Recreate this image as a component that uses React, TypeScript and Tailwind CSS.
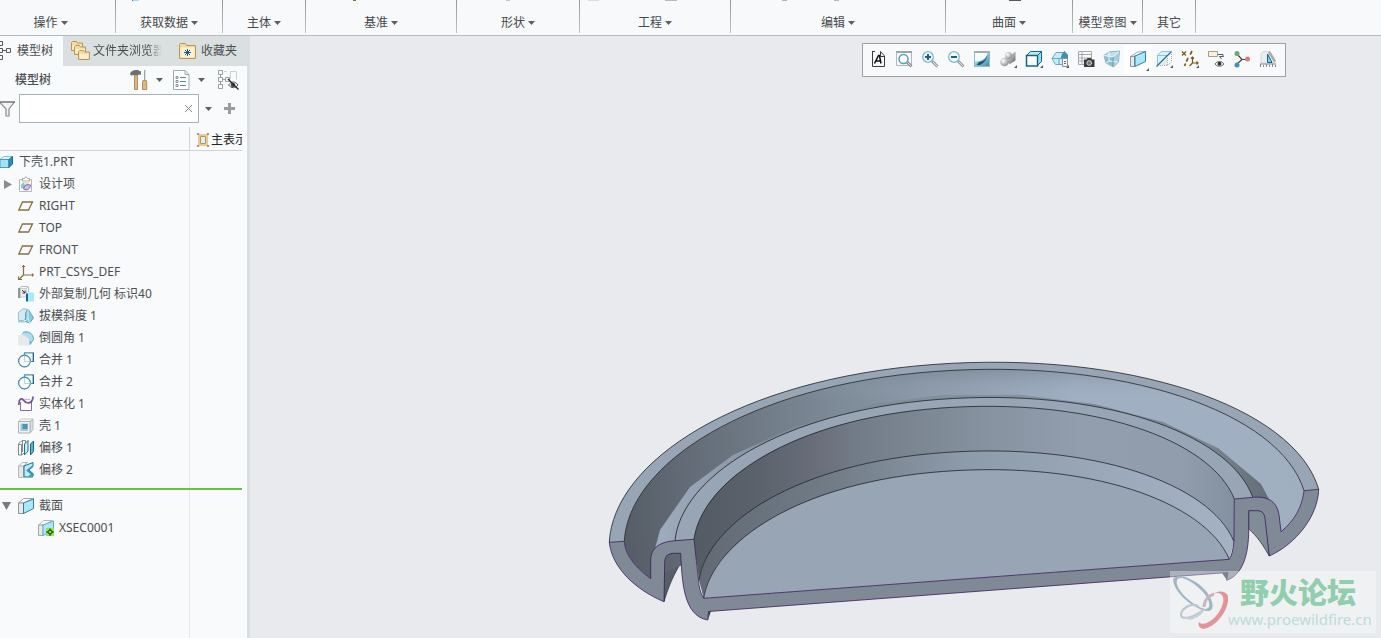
import React from 'react';

type Point = [number, number];

/* ---------- Ribbon ---------- */

type Mark = { x: number; w: number; h: number; color: string };
type RibbonGroup = { label: string; width: string; menu: boolean; marks: Mark[] };

const ribbonGroups: RibbonGroup[] = [
  { label: '操作', width: 'w-[116px]', menu: true, marks: [] },
  { label: '获取数据', width: 'w-[107px]', menu: true, marks: [{ x: 16, w: 2, h: 1, color: '#4a90b0' }, { x: 17, w: 6, h: 1, color: '#9fe0f5' }] },
  { label: '主体', width: 'w-[83px]', menu: true, marks: [] },
  { label: '基准', width: 'w-[151px]', menu: true, marks: [{ x: 47, w: 3, h: 1, color: '#8a6a30' }] },
  { label: '形状', width: 'w-[123px]', menu: true, marks: [{ x: 49, w: 4, h: 1, color: '#c4c6c8' }] },
  { label: '工程', width: 'w-[151px]', menu: true, marks: [{ x: 8, w: 11, h: 1, color: '#dcdee0' }, { x: 85, w: 12, h: 1, color: '#b8babc' }] },
  { label: '编辑', width: 'w-[215px]', menu: true, marks: [{ x: 51, w: 5, h: 1, color: '#b0b2b4' }, { x: 103, w: 5, h: 1, color: '#b8babc' }] },
  { label: '曲面', width: 'w-[127px]', menu: true, marks: [{ x: 63, w: 12, h: 1, color: '#55585c' }] },
  { label: '模型意图', width: 'w-[70px]', menu: true, marks: [] },
  { label: '其它', width: 'w-[53px]', menu: false, marks: [] },
];

function Caret() {
  return (
    <svg className="h-[4px] w-[7px] shrink-0" viewBox="0 0 7 4" aria-hidden="true">
      <path d="M0 0H7L3.5 4Z" fill="#5c5f62" />
    </svg>
  );
}

function Ribbon() {
  return (
    <header className="flex h-[36px] overflow-hidden border-b border-[#b4bcbe] bg-[#f8f9fb]">
      {ribbonGroups.map((g, i) => (
        <div key={g.label} className={`flex shrink-0 ${g.width}`}>
          <div className="flex min-w-0 flex-1 flex-col justify-between">
            <svg className="h-[2px] w-full" aria-hidden="true">
              {g.marks.map((m) => (
                <rect key={m.x} x={m.x} y="0" width={m.w} height={m.h} fill={m.color} />
              ))}
            </svg>
            <button
              type="button"
              className={`flex h-[26px] items-center justify-center gap-[3px] pt-[2px] whitespace-nowrap text-[#46484b] ${i === 0 ? 'pr-[14px]' : ''}`}
            >
              {g.label}
              {g.menu && <Caret />}
            </button>
          </div>
          <span className="h-[33px] w-px bg-linear-to-b from-[#94989c] to-[#bfc4c6]" />
        </div>
      ))}
    </header>
  );
}

/* ---------- Icons ---------- */

function Icon({ children, size = 'size-[18px]' }: { children: React.ReactNode; size?: string }) {
  return (
    <svg className={`shrink-0 ${size}`} viewBox="0 0 18 18" fill="none" aria-hidden="true">
      {children}
    </svg>
  );
}

const Corner = () => <path d="M18 15v3h-3z" fill="#55585c" />;

const RefitIcon = () => (
  <Icon>
    <path d="M3.500 1.500v15h12V6M15.500 6.500h-4v-5" stroke="#3a3d40" />
    <path d="M5.500 13.500l4-8h1l1.500 8M7 11h4.500" stroke="#111" strokeWidth="1.500" />
    <path d="M3 1.500h3M11.500 1.500l4 4.500" stroke="#3a3d40" />
  </Icon>
);
const ZoomAreaIcon = () => (
  <Icon>
    <path d="M1.500 1.500h15v14h-15z" stroke="#b5b8bb" />
    <path d="M1 2h16" stroke="#9fa3a6" strokeWidth="2" />
    <path d="M12 12l4.500 4.500" stroke="#8f9396" strokeWidth="3" />
    <path d="M12.500 12.500l3.500 3.500" stroke="#d5d8da" />
    <circle cx="8.500" cy="9" r="4.500" fill="#fff" stroke="#4fa3c4" strokeWidth="1.500" />
  </Icon>
);
const Lens = ({ plus }: { plus: boolean }) => (
  <Icon>
    <path d="M11 11l5.500 5.500" stroke="#9b9fa2" strokeWidth="3" />
    <path d="M12 12l4 4" stroke="#dfe1e2" />
    <circle cx="7" cy="7" r="5.300" fill="#f4fbfe" stroke="#7fb6cd" strokeWidth="1.300" />
    <path d={plus ? 'M4 7h6M7 4v6' : 'M4 7h6'} stroke="#12648b" strokeWidth="2" />
  </Icon>
);
const RepaintIcon = () => (
  <Icon>
    <defs>
      <linearGradient id="repaint" x1="0" x2="1" y1="0" y2="1">
        <stop offset="0" stopColor="#e6f6fb" />
        <stop offset="1" stopColor="#3d8db3" />
      </linearGradient>
    </defs>
    <path d="M1 1h16v16H1z" fill="#8fbccd" />
    <path d="M2 3h14v13H2z" fill="url(#repaint)" />
    <path d="M2 3h12.500c-1 5-5 8-12.500 8.500z" fill="#f6fbfd" />
    <path d="M14.500 4c-.5 5-4.500 7.500-8.500 8l-2.500 3h3.500C11 13 14.500 9 14.500 4z" fill="#1a5675" />
    <path d="M1 1h16v2H1z" fill="#a6abae" />
  </Icon>
);
const ShadeIcon = () => (
  <Icon>
    <defs>
      <radialGradient id="ball" cx=".35" cy=".35" r=".7">
        <stop offset="0" stopColor="#fff" />
        <stop offset="1" stopColor="#8d9092" />
      </radialGradient>
      <linearGradient id="cone" x1="0" x2="1" y1="0" y2="1">
        <stop offset="0" stopColor="#fff" />
        <stop offset="1" stopColor="#5e6163" />
      </linearGradient>
    </defs>
    <path d="M8 3l5 1 3.500-2.500v9L11 14l-4-3z" fill="url(#cone)" />
    <circle cx="9.500" cy="5.500" r="3.500" fill="url(#ball)" />
    <circle cx="5.500" cy="12" r="4.300" fill="url(#ball)" />
    <Corner />
  </Icon>
);
const CubeIcon = () => (
  <Icon>
    <path d="M1.500 5.500l4-4h11l-4 4z" fill="#bdeafa" stroke="#15668c" />
    <path d="M12.500 5.500l4-4v10l-4 4z" fill="#9edcf2" stroke="#15668c" />
    <path d="M1.500 5.500h11v10.500h-11z" fill="#fff" stroke="#15668c" strokeWidth="1.500" />
    <Corner />
  </Icon>
);
const ViewListIcon = () => (
  <Icon>
    <path d="M1 8.500l4-6h8l3 6-3 6H4.500z" fill="#c8edf8" stroke="#63a9c4" />
    <path d="M1 8.500h10M8 8.500v6" stroke="#63a9c4" />
    <path d="M9.500 8.500L11 4l2.500-3L17 5v3.500z" fill="#3d91b8" />
    <path d="M11.500 8.500h5v8h-5z" fill="#f4f5f6" stroke="#8e9295" />
    <path d="M13 11.500h2M13 13.500h2" stroke="#65696c" />
    <Corner />
  </Icon>
);
const CameraTableIcon = () => (
  <Icon>
    <path d="M1.500 1.500h13v13h-13zM1.500 4.500h13M1.500 8h13M1.500 11h9M5 1.500v13" stroke="#a5a9ac" />
    <path d="M7 9.500h2.500l1-1.500H14l1 1.500h2.500V17H7z" fill="#3a3c3f" />
    <circle cx="12.200" cy="13" r="2.300" fill="#707376" stroke="#d8dadb" />
  </Icon>
);
const PerspectiveIcon = () => (
  <Icon>
    <path d="M1 5.500L6 2l10.500-1-1 11-5 5L3 13z" fill="#c0e0ec" stroke="#8ab3c4" />
    <path d="M2 6l8 1v9l-7-3.500z" fill="#8abdd2" />
    <path d="M10 7l6-5-1 9.500-5 5z" fill="#a5cfdf" />
    <path d="M1.500 5.500L10 7l6-5.500M6 2v9l-3 2M6 11l9 1" stroke="#eaf7fb" />
    <path d="M10 7v9.500" stroke="#6a9db3" />
  </Icon>
);
const SectionIcon = () => (
  <Icon>
    <path d="M1.500 6.500l7-4.500 8-.5-9.500 4.500z" fill="#fff" stroke="#a2a5a8" />
    <path d="M1.500 6.500h4v10h-4z" fill="#e8e9ea" stroke="#929699" />
    <path d="M6 6l10.500-4.500v10L6 16.500z" fill="#a9e8fb" stroke="#337f9d" />
  </Icon>
);
const TransparentIcon = () => (
  <Icon>
    <path d="M2 16V5l4-4h9z" fill="#d6f2fa" />
    <path d="M2.500 15V5l4-3.500h9M2.500 5.500h10" stroke="#8fc6da" />
    <path d="M12.500 8v7.500H5M16.500 4v8l-4 3.500" stroke="#a5a8ab" strokeDasharray="1 1" />
    <path d="M12 8v7H5z" fill="#e6e7e8" />
    <path d="M1.500 16.500l15-15" stroke="#1a6e96" strokeWidth="1.300" />
    <Corner />
  </Icon>
);
const DatumDisplayIcon = () => (
  <Icon>
    <path d="M1 1.500l4 4M5 1.500l-4 4" stroke="#79591c" strokeWidth="1.200" />
    <path d="M11 1L9 5M7 8l-3.500 8" stroke="#79591c" strokeWidth="1.700" strokeDasharray="4 2" />
    <path d="M11.500 7v6H17M11.500 13L8.500 16M10 8.500L11.500 7 13 8.500M15.500 11.500L17 13l-1.500 1.500" stroke="#79591c" strokeWidth="1.200" />
    <Corner />
  </Icon>
);
const AnnotationIcon = () => (
  <Icon>
    <path d="M1.500 1.500h9v5h-9z" fill="#fdf0da" stroke="#a59c8c" />
    <path d="M11 4.500h5V7M16.500 6.500h-4l2 2.500" stroke="#55585c" />
    <path d="M8 14c2.500-3.500 6.500-3.500 9 0-2.500 3-6.500 3-9 0z" fill="#fff" stroke="#6a6d70" />
    <circle cx="12.500" cy="13.800" r="2" fill="#303336" />
  </Icon>
);
const SpinCenterIcon = () => (
  <Icon>
    <path d="M4 4l5 5.500M9 9.500h5M9 9.500L4 14" stroke="#44474a" strokeWidth="1.200" />
    <circle cx="4" cy="3.500" r="2.500" fill="#67ab6e" />
    <circle cx="14.500" cy="9" r="2.500" fill="#dd7d78" />
    <circle cx="4" cy="15" r="2.500" fill="#3f92b6" />
  </Icon>
);
const SimulateIcon = () => (
  <Icon>
    <path d="M2 13V4l2-2.500h7l5 9V13z" fill="#eceded" stroke="#d3d5d7" />
    <path d="M10 2l6 9.500" stroke="#a7a9ac" strokeWidth="2.500" />
    <path d="M8.500 12.500V4l4.500 8.500z" fill="#7fd0ec" stroke="#15668c" />
    <path d="M1 14h16M1.500 14v3M4.500 15v2M7.500 14v3M10.500 15v2M13.500 14v3M16.500 15v2" stroke="#85888b" />
  </Icon>
);

const viewTools: { name: string; icon: React.ReactNode; active?: boolean }[] = [
  { name: '重新调整', icon: <RefitIcon /> },
  { name: '缩放区域', icon: <ZoomAreaIcon /> },
  { name: '放大', icon: <Lens plus /> },
  { name: '缩小', icon: <Lens plus={false} /> },
  { name: '重画', icon: <RepaintIcon /> },
  { name: '渲染选项', icon: <ShadeIcon /> },
  { name: '显示样式', icon: <CubeIcon /> },
  { name: '已保存方向', icon: <ViewListIcon /> },
  { name: '视图管理器', icon: <CameraTableIcon /> },
  { name: '透视图', icon: <PerspectiveIcon /> },
  { name: '截面', icon: <SectionIcon />, active: true },
  { name: '透明', icon: <TransparentIcon /> },
  { name: '基准显示', icon: <DatumDisplayIcon /> },
  { name: '注释显示', icon: <AnnotationIcon /> },
  { name: '旋转中心', icon: <SpinCenterIcon /> },
  { name: '仿真', icon: <SimulateIcon /> },
];

function ViewToolbar() {
  return (
    <div className="absolute top-[7px] left-[612px] flex h-[34px] items-center border border-[#9da1a4] bg-[#f8f9fb] pr-[4px] pb-[2px] pl-[2px]">
      {viewTools.map((t) => (
        <button
          key={t.name}
          type="button"
          aria-label={t.name}
          className={
            t.active
              ? 'relative -mx-px flex h-[28px] w-[28px] items-center justify-center bg-white'
              : 'flex h-[28px] w-[26px] items-center justify-center'
          }
        >
          {t.icon}
          {t.active && (
            <svg className="absolute right-[3px] bottom-[2px] size-[3px]" viewBox="0 0 3 3" aria-hidden="true">
              <path d="M3 0v3H0z" fill="#55585c" />
            </svg>
          )}
        </button>
      ))}
    </div>
  );
}

/* ---------- Tree icons ---------- */

function TreeIcon({ children }: { children: React.ReactNode }) {
  return (
    <svg className="size-[16px] shrink-0" viewBox="0 0 16 16" fill="none" aria-hidden="true">
      {children}
    </svg>
  );
}

const PartIcon = () => (
  <TreeIcon>
    <path d="M0 5.500L4 2.500h8L9 5.500z" fill="#e4f7fd" stroke="#8cc3d8" />
    <path d="M0 5.500h9v8H0z" fill="#a2e2f7" stroke="#4f9cba" />
    <path d="M9 5.500l3.500-3v7.500L9 13.500z" fill="#2a92be" stroke="#176b90" />
  </TreeIcon>
);
const DesignItemsIcon = () => (
  <TreeIcon>
    <path d="M1.500 3.500h12v12h-12z" fill="#f9f9fa" stroke="#b4b7ba" />
    <path d="M4.500 5V2.500h2c0-2 3-2 3 0h2V5z" fill="#fff" stroke="#a5a8ab" />
    <path d="M3 8.500l2-2h5v3.500l-2 2H3z" fill="#7cc7e2" />
    <path d="M6 5.500h5v3H6z" fill="#f1e0bf" />
    <path d="M5.500 13c1-4 4-5 7-4-.5 4-3 6-7 4z" fill="#d3bce8" stroke="#7f62a8" />
  </TreeIcon>
);
const PlaneIcon = () => (
  <TreeIcon>
    <path d="M4.500 4h10l-4 8H.8z" stroke="#86703f" strokeWidth="1.300" />
  </TreeIcon>
);
const CsysIcon = () => (
  <TreeIcon>
    <path d="M5.500 1v10H16M5.500 11l-4.500 4.500M4 2.500h3M14.500 9.500v3M.5 12.500v3h3.500" stroke="#86703f" strokeWidth="1.200" />
  </TreeIcon>
);
const CopyGeomIcon = () => (
  <TreeIcon>
    <path d="M1.500 2.500L3 .5h7l-1.500 2zM10.500 1v5" fill="#fff" stroke="#b7babd" />
    <path d="M0 2h2.500v10H0z" fill="#929699" />
    <path d="M2.500 2.500h6V11h-6z" fill="#eeeff0" stroke="#c9cbcd" />
    <path d="M4 4l3 3M7 4.500V7H4.500" stroke="#333" />
    <path d="M8 7.500h2v8H8z" fill="#126a8f" />
    <path d="M10 6.500h6v9h-6z" fill="#a9e8fb" />
  </TreeIcon>
);
const DraftIcon = () => (
  <TreeIcon>
    <path d="M.5 12.500V4.500l4-3.500h4v9l-3 2.500z" fill="#d3e9f1" stroke="#9fc0cd" />
    <path d="M7.500 13.500V5l2.500-4 5.500 9-4 5z" fill="#84cbe4" stroke="#62a4be" />
    <path d="M10 1v9l-5 5M10 10l1.500 5" stroke="#d8f0f8" />
    <path d="M0 13h7v1.500H0z" fill="#aac9d5" />
  </TreeIcon>
);
const RoundIcon = () => (
  <TreeIcon>
    <path d="M0 5h6c4 2 5 4 5 10.500H0z" fill="#e8e9ea" />
    <path d="M3 4.500c1-2 3-3 5-3 5 0 7.500 4 7.500 8l-3.500 5c0-5-3-9-9-10z" fill="#a9def0" />
    <path d="M5 2.500c5-2 10.500 1 10.500 7l-3.500 5V11" stroke="#5ba3bf" />
  </TreeIcon>
);
const MergeIcon = () => (
  <TreeIcon>
    <circle cx="6.500" cy="9" r="5.900" stroke="#4088a5" strokeWidth="1.200" />
    <path d="M6.500 4V.8H15M12.500 9.500h3" stroke="#4f97b3" strokeWidth="1.200" />
    <path d="M6.500 4v5.500h6" stroke="#b3d6e3" />
    <path d="M15.300.500v9.500" stroke="#1d6384" strokeWidth="1.300" />
  </TreeIcon>
);
const SolidifyIcon = () => (
  <TreeIcon>
    <path d="M2.500 6v8.500h11V5" fill="#fff" stroke="#8a69b0" />
    <path d="M.8 9c0-6 2.500-8 5-4.500S13 8 14.500 3.500l.7-3" stroke="#7751a0" strokeWidth="1.700" />
    <path d="M6 3.500h6" stroke="#c6b0dc" />
  </TreeIcon>
);
const ShellIcon = () => (
  <TreeIcon>
    <path d="M.5 3.500l3-2.500h11.500l-3 2.500z" fill="#f6f6f7" stroke="#c6c8ca" />
    <path d="M12 3.500L15 1v10.500l-3 3.500z" fill="#dcdedf" stroke="#b6b9bb" />
    <path d="M.5 3.500h11.500V15H.5z" fill="#f2f2f3" stroke="#b0b3b5" />
    <path d="M2.500 5.500h7.500V13H2.500z" fill="#9fcadc" />
    <path d="M4.500 6h5v5h-5z" fill="#4a93b3" />
  </TreeIcon>
);
const OffsetIcon = () => (
  <TreeIcon>
    <path d="M.5 3.500l4-3h3M.5 3.500V15h3l4-3V.500M3.500 15V4.500h-3M4.500.5V12" stroke="#85898c" />
    <path d="M6.500 4l3.500-3.500V11L6.500 15z" fill="#c9eefa" stroke="#236f91" />
    <path d="M12.500 4L15.500 1v10.500l-3 3.500z" fill="#58b6d8" stroke="#1d6384" />
  </TreeIcon>
);
const OffsetRegionIcon = () => (
  <TreeIcon>
    <path d="M.5 4l4-3.500h5L5.500 4z" fill="#fff" stroke="#aeb1b4" />
    <path d="M.5 4h5v11.500h-5z" fill="#e6e7e8" stroke="#b8bbbd" />
    <path d="M6 4l9-3.500v3.500l-4 4 4.500 4-1 3H6z" fill="#bcecfb" stroke="#236f91" />
    <path d="M15 4L9.500 8.500l5 4-3.500 2" stroke="#3694bb" strokeWidth="1.700" />
  </TreeIcon>
);
const SectionGroupIcon = () => (
  <TreeIcon>
    <path d="M.5 5l5-4.500h10L6 5z" fill="#fff" stroke="#a2a5a8" />
    <path d="M.5 5H5.500v10.500h-5z" fill="#e8e9ea" stroke="#929699" />
    <path d="M5.500 5l10-4v9.500l-10 5z" fill="#a9e8fb" stroke="#337f9d" />
  </TreeIcon>
);
const XsecIcon = () => (
  <TreeIcon>
    <path d="M.5 5l5-4.500h9L6 5z" fill="#fff" stroke="#b6b9bb" />
    <path d="M.5 5H5v10.500H.5z" fill="#e8e9ea" stroke="#a2a5a8" />
    <path d="M5 5l10.500-4v9.500L5 15.500z" fill="#a9e8fb" stroke="#6aa9c1" />
    <path d="M8 8h8v8H8z" fill="#8ce65a" />
    <path d="M12 9.500l2.500 2.500-2.500 2.500L9.500 12zM12 8.500v1.500M12 14v2M8 12h2M14 12h2" stroke="#2c4f15" strokeWidth="1.200" />
  </TreeIcon>
);

/* ---------- Side panel ---------- */

const treeItems: { label: string; icon: React.ReactNode; expandable?: boolean }[] = [
  { label: '设计项', icon: <DesignItemsIcon />, expandable: true },
  { label: 'RIGHT', icon: <PlaneIcon /> },
  { label: 'TOP', icon: <PlaneIcon /> },
  { label: 'FRONT', icon: <PlaneIcon /> },
  { label: 'PRT_CSYS_DEF', icon: <CsysIcon /> },
  { label: '外部复制几何 标识40', icon: <CopyGeomIcon /> },
  { label: '拔模斜度 1', icon: <DraftIcon /> },
  { label: '倒圆角 1', icon: <RoundIcon /> },
  { label: '合并 1', icon: <MergeIcon /> },
  { label: '合并 2', icon: <MergeIcon /> },
  { label: '实体化 1', icon: <SolidifyIcon /> },
  { label: '壳 1', icon: <ShellIcon /> },
  { label: '偏移 1', icon: <OffsetIcon /> },
  { label: '偏移 2', icon: <OffsetRegionIcon /> },
];

function Folder({ x, y }: { x: number; y: number }) {
  return (
    <g transform={`translate(${x} ${y})`}>
      <path d="M.5 9.500v-8l1-1h4l1 1.500h5v7.500z" fill="#f6d99f" stroke="#b8965a" />
      <path d="M1.500 4h9v4.500h-9z" fill="#fdf0cf" />
    </g>
  );
}

function PanelTabs() {
  return (
    <div role="tablist" className="flex h-[30px] bg-[#dae0e0]">
      <button role="tab" aria-selected="true" type="button" className="flex w-[63px] items-center gap-[6px] bg-[#f8fafb] whitespace-nowrap">
        <svg className="h-[20px] w-[11px] shrink-0" viewBox="0 0 11 20" fill="none" stroke="#55585c" aria-hidden="true">
          <path d="M-1 .5h3.500v4H-1M-1 7.500h3.500v4H-1M-1 14.500h3.500v4H-1M3 9.500h3M6.500 7.500h4v4h-4z" />
        </svg>
        模型树
      </button>
      <button role="tab" aria-selected="false" type="button" className="flex w-[108px] items-center gap-[2px] pl-[8px] whitespace-nowrap">
        <svg className="h-[20px] w-[20px] shrink-0" viewBox="0 0 20 20" aria-hidden="true">
          <Folder x={0} y={0} />
          <Folder x={3} y={4} />
          <Folder x={7} y={9} />
        </svg>
        <span className="w-[69px] overflow-hidden mask-r-from-80% text-left">文件夹浏览器</span>
      </button>
      <button role="tab" aria-selected="false" type="button" className="flex flex-1 items-center gap-[5px] pl-[8px] whitespace-nowrap">
        <svg className="h-[16px] w-[17px] shrink-0" viewBox="0 0 17 16" aria-hidden="true">
          <path d="M.5 15.500v-14l1-1h5l1 2h9v13z" fill="#f6d99f" stroke="#b8965a" />
          <path d="M1.500 4.500h14v10h-14z" fill="#fdf0cf" />
          <path d="M8.500 6v7M5 9.500h7M6 7l5 5M11 7l-5 5" stroke="#12648b" />
        </svg>
        收藏夹
      </button>
    </div>
  );
}

function PanelTools() {
  return (
    <div className="flex h-[28px] items-center pl-[15px]">
      <h2 className="w-[115px] font-medium">模型树</h2>
      <button type="button" aria-label="设置" className="flex items-center gap-[8px]">
        <svg className="h-[20px] w-[18px]" viewBox="0 0 18 20" aria-hidden="true">
          <path d="M0 4c1-3 3-4 6-4h2c1 0 1 2 3 1v4c-2-1-2 0-3 0H4L1 5.500z" fill="#6b6f73" />
          <path d="M4.500 5h3v14.500h-3z" fill="#deb880" stroke="#94703a" strokeWidth=".7" />
          <path d="M14 0h1.300v10H14z" fill="#9fa3a7" />
          <path d="M13 10.500h3.300l.4 2v7h-4.200v-7z" fill="#deb880" stroke="#94703a" strokeWidth=".7" />
        </svg>
        <Caret />
      </button>
      <button type="button" aria-label="显示" className="ml-[10px] flex items-center gap-[8px]">
        <svg className="h-[20px] w-[17px]" viewBox="0 0 17 20" fill="none" stroke="#a1a7aa" aria-hidden="true">
          <path d="M.5.500H12l4 4v15H.5z" fill="#fff" />
          <path d="M12 .500v4h4" />
          <path d="M7 7.500h6M7 11.500h6M7 15.500h6" stroke="#5f8496" />
          <path d="M3 6.500h2v2H3zM3 10.500h2v2H3zM3 14.500h2v2H3z" stroke="#8b9093" />
        </svg>
        <Caret />
      </button>
      <button type="button" aria-label="隐藏列" className="ml-[13px]">
        <svg className="h-[20px] w-[21px]" viewBox="0 0 21 20" fill="none" aria-hidden="true">
          <path d="M.5.500h4v4h-4zM.5 7.500h4v4h-4zM.5 14.500h4v4h-4zM7.500 7.500h4v4h-4zM2.500 5v2M2.500 12v2M5 9.500h2" stroke="#9a9ea1" />
          <path d="M6 1.500h3M12.500 1v8M12 1.500h6.500v8" stroke="#cfd2d4" />
          <path d="M10.500 15c3-4 6.500-4 9.500 0-3 3.500-6.500 3.500-9.500 0z" fill="#fff" stroke="#55585c" />
          <circle cx="15" cy="15" r="2.300" fill="#44474a" />
          <path d="M10 9l10.500 10.500" stroke="#222" strokeWidth="1.200" />
        </svg>
      </button>
    </div>
  );
}

function FilterRow() {
  return (
    <div className="flex h-[29px] items-center">
      <svg className="mr-[4px] h-[16px] w-[15px] shrink-0" viewBox="0 0 15 16" aria-hidden="true">
        <path d="M-.5 1h15L9 8v7H6V8z" fill="#f1f2f3" stroke="#8a8e91" strokeWidth="1.200" />
        <path d="M0 1h15" stroke="#65696c" />
      </svg>
      <div className="flex h-[29px] w-[180px] items-center border border-[#a6b5b6] bg-white pr-[5px]">
        <input type="text" aria-label="过滤" className="h-full min-w-0 flex-1 px-[4px] outline-none" />
        <button type="button" aria-label="清除">
          <svg className="size-[9px]" viewBox="0 0 9 9" stroke="#85898c" aria-hidden="true">
            <path d="M1 1l7 7M8 1L1 8" />
          </svg>
        </button>
      </div>
      <button type="button" aria-label="搜索选项" className="ml-[6px]">
        <Caret />
      </button>
      <button type="button" aria-label="添加" className="ml-[12px]">
        <svg className="size-[11px]" viewBox="0 0 11 11" stroke="#999da0" strokeWidth="3" aria-hidden="true">
          <path d="M0 5.500h11M5.500 0v11" />
        </svg>
      </button>
    </div>
  );
}

function ModelTree() {
  return (
    <div className="flex flex-1">
      <div className="w-[190px] shrink-0 border-r border-[#e6eaec] whitespace-nowrap">
        <ul>
          <li className="flex h-[22px] items-center gap-[3px]">
            <PartIcon />
            下壳1.PRT
          </li>
          {treeItems.map((item) => (
            <li key={item.label} className="flex h-[22px] items-center gap-[5px] pl-[4px]">
              <span className="flex w-[9px] shrink-0">
                {item.expandable && (
                  <svg className="h-[9px] w-[8px]" viewBox="0 0 8 9" aria-hidden="true">
                    <path d="M0 0l8 4.500L0 9z" fill="#898c8f" />
                  </svg>
                )}
              </span>
              {item.icon}
              {item.label}
            </li>
          ))}
        </ul>
        <hr className="mt-[7px] mb-[5px] w-[242px] border-t-2 border-[#68c04c]" />
        <ul>
          <li className="flex h-[22px] items-center gap-[5px] pl-[2px]">
            <svg className="mr-[2px] h-[8px] w-[9px]" viewBox="0 0 9 8" aria-hidden="true">
              <path d="M0 0h9L4.500 8z" fill="#77797c" />
            </svg>
            <SectionGroupIcon />
            截面
          </li>
          <li className="flex h-[22px] items-center gap-[5px] pl-[38px]">
            <XsecIcon />
            XSEC0001
          </li>
        </ul>
      </div>
    </div>
  );
}

function SidePanel() {
  return (
    <aside className="flex w-[250px] shrink-0 flex-col">
      <PanelTabs />
      <div className="flex flex-1 flex-col border-r-[3px] border-[#dae0e0] bg-[#f8fafb]">
        <PanelTools />
        <FilterRow />
        <div className="mt-[4px] mr-[5px] flex h-[24px] border-b border-[#cfd3d5]">
          <span className="w-[190px] shrink-0 border-r border-[#cfd3d5]" />
          <span className="flex min-w-0 flex-1 items-center gap-[2px] overflow-hidden pt-[3px] pl-[7px] whitespace-nowrap text-[#222]">
            <svg className="h-[14px] w-[12px] shrink-0" viewBox="0 0 12 14" aria-hidden="true">
              <path d="M2 2h8v10H2z" fill="#d5f1fa" stroke="#e8cb94" strokeWidth="2" />
              <path d="M3.500 3.500h5v7h-5z" fill="none" stroke="#b8965a" />
              <path d="M0 0h2v2H0zM10 0h2v2h-2zM0 12h2v2H0zM10 12h2v2h-2z" fill="#b8965a" />
            </svg>
            主表示
          </span>
        </div>
        <ModelTree />
      </div>
    </aside>
  );
}

/* ---------- Model ---------- */

const K = 0.5523;
const f = (n: number) => n.toFixed(1);

/* Projected half circle: both ends of the diameter, the offset of the far point
   from the centre, and how far the curve leans inwards at either end. */
type Rim = { l: Point; r: Point; rise: Point; lean: Point };

function rim({ l, r, rise, lean }: Rim, reverse = false): string {
  const u: Point = [(r[0] - l[0]) / 2, (r[1] - l[1]) / 2];
  const t: Point = [l[0] + u[0] + rise[0], l[1] + u[1] + rise[1]];
  const pts: Point[] = [
    l,
    [l[0] + lean[0], l[1] + K * rise[1] + 3],
    [t[0] - K * u[0], t[1] - K * u[1]],
    t,
    [t[0] + K * u[0], t[1] + K * u[1]],
    [r[0] - lean[1], r[1] + K * rise[1] + 1],
    r,
  ];
  const p = (reverse ? [...pts].reverse() : pts).map(([x, y]) => `${f(x)} ${f(y)}`);
  return `${p[0]}C${p[1]} ${p[2]} ${p[3]}C${p[4]} ${p[5]} ${p[6]}`;
}

const outer: Rim = { l: [609.3, 542.3], r: [1318.7, 489.3], rise: [-31, -151.3], lean: [4, 24] };
const lip: Rim = { l: [624.3, 541.3], r: [1304, 490.7], rise: [-29.7, -144.5], lean: [4, 24] };
const ridge: Rim = { l: [675, 540.7], r: [1252.7, 497], rise: [-25, -119.5], lean: [6, 24] };
const wallTop: Rim = { l: [694, 539.3], r: [1234.3, 499], rise: [-24, -111], lean: [8, 24] };
const wallBottom: Rim = { l: [699, 580], r: [1234, 541.7], rise: [-23, -108.3], lean: [9, 24] };
const floor: Rim = { l: [703.7, 598.3], r: [1229.3, 559.3], rise: [-23, -107.4], lean: [9, 25] };

const band = (top: Rim, bottom: Rim) => `M${rim(top)}L${rim(bottom, true)}Z`;

const sectionFace =
  'M609.3 542.3C612 568 636 590 664 601.7L664.700 562C665 555 669 553.300 674 553.300H680.700C682 580 683 616 707.700 620L708.500 611.500L1228 572.500L1226.700 580.300C1242 575 1248.700 556 1248.700 530V510.700H1258C1264 511 1265 516 1265.500 523L1269.300 556C1296 544 1318 516 1318.700 489.300L1304 490.700C1302 508 1294 521 1281 531.700L1279 515C1277 503 1270 496 1253.300 497.300L1234.300 499L1234 540C1233.500 548 1232 555 1229.300 559.300L703.700 598.300C700 593 699 586 698.500 580L694 539.300L675 540.700C658 542 651 549 650.700 560V578.700C636 568 625 555 624.300 541.300Z';

const facets =
  'M652 560L660 530L690 487L733 455L795 427L873 404L940 395.300L1020 394.700L1095 404L1163 422L1218 448L1261 484L1270 501L';

function Model() {
  return (
    <svg className="absolute inset-0 h-full w-full" role="img" aria-label="下壳1 截面模型">
      <defs>
        <linearGradient id="groove" gradientUnits="userSpaceOnUse" x1="624" y1="540" x2="1304" y2="470">
          <stop offset="0" stopColor="#565d67" />
          <stop offset=".1" stopColor="#626b76" />
          <stop offset=".25" stopColor="#74808c" />
          <stop offset=".4" stopColor="#8592a0" />
          <stop offset=".55" stopColor="#94a2b4" />
          <stop offset=".68" stopColor="#a0afc3" />
          <stop offset="1" stopColor="#a0afc0" />
        </linearGradient>
        <linearGradient id="grooveDepth" gradientUnits="userSpaceOnUse" x1="0" y1="368" x2="0" y2="400">
          <stop offset="0" stopColor="#66727e" stopOpacity=".4" />
          <stop offset="1" stopColor="#a5b4c8" stopOpacity="0" />
        </linearGradient>
        <linearGradient id="wall" gradientUnits="userSpaceOnUse" x1="694" y1="0" x2="1234" y2="0">
          <stop offset="0" stopColor="#555b65" />
          <stop offset=".12" stopColor="#5b626c" />
          <stop offset=".24" stopColor="#6b707c" />
          <stop offset=".3" stopColor="#727c88" />
          <stop offset=".55" stopColor="#8793a0" />
          <stop offset=".72" stopColor="#929eae" />
          <stop offset=".9" stopColor="#919dad" />
          <stop offset="1" stopColor="#8491a0" />
        </linearGradient>
        <linearGradient id="fillet" gradientUnits="userSpaceOnUse" x1="700" y1="0" x2="1234" y2="0">
          <stop offset="0" stopColor="#626b75" />
          <stop offset=".25" stopColor="#717c87" />
          <stop offset=".5" stopColor="#8e9baa" />
          <stop offset=".8" stopColor="#9caabb" />
          <stop offset="1" stopColor="#a4b2c3" />
        </linearGradient>
        <linearGradient id="shoulder" gradientUnits="userSpaceOnUse" x1="655" y1="0" x2="1270" y2="0">
          <stop offset="0" stopColor="#9eacbd" />
          <stop offset=".1" stopColor="#919eae" />
          <stop offset=".25" stopColor="#7c8894" />
          <stop offset=".6" stopColor="#8593a2" />
          <stop offset=".9" stopColor="#7a8692" />
          <stop offset="1" stopColor="#626c76" />
        </linearGradient>
      </defs>
      <g transform="translate(-250 -36)" strokeLinejoin="round">
        <path d="M664 601.700C669 585 674 574 681.500 562V552H664Z" fill="#575e68" stroke="#2a2e33" strokeWidth=".7" />
        <path d="M1248.700 529C1257 536 1263 545 1269.300 556L1266 510H1248.700Z" fill="#808c98" stroke="#2a2e33" strokeWidth=".7" />
        <path d={band(outer, lip)} fill="#98a5b5" />
        <path
          d={`M${rim(lip)}C1302 508 1294 521 1281 531.700L1270 500L1234.300 499L694 560L650.700 578.700C636 568 625 555 624.300 541.300Z`}
          fill="url(#groove)"
        />
        <path d={band(lip, ridge)} fill="url(#grooveDepth)" />
        <path d={`${facets}${rim(ridge, true)}Z`} fill="url(#shoulder)" />
        <path d={band(ridge, wallTop)} fill="#98a5b5" />
        <path d={band(wallTop, wallBottom)} fill="url(#wall)" />
        <path d={band(wallBottom, floor)} fill="url(#fillet)" />
        <path d={`M${rim(floor)}Z`} fill="#98a5b5" />
        <path d="M1228 572.500L1222 573L1227 580.300ZM708.500 611.500L711 611L708 620Z" fill="#3a3f45" />
        <g fill="none" stroke="#1f2327" strokeWidth=".8">
          {[outer, lip, ridge, wallTop, wallBottom, floor].map((r) => (
            <path key={r.l[0]} d={`M${rim(r)}`} />
          ))}
        </g>
        <path d={sectionFace} fill="#808a96" stroke="#3b1b5c" strokeWidth=".8" />
      </g>
    </svg>
  );
}

function Watermark() {
  return (
    <div className="absolute right-[5px] bottom-[5px] flex h-[62px] w-[206px] bg-white/35">
      <svg className="h-[62px] w-[58px] shrink-0" viewBox="0 0 58 62" fill="none" aria-hidden="true">
        <path
          fillRule="evenodd"
          d="M3 8C8 1 26 8 36 20C44 30 45 40 38 40C28 40 4 24 3 8ZM7 9C4 17 22 35 35 38C42 38 40 29 33 21C24 11 10 3 7 9Z"
          fill="#a3b5c3"
        />
        <path
          fillRule="evenodd"
          d="M37 28C45 19 55 18 58 25C60 38 46 57 33 58C28 57 28 52 29 51C33 56 43 50 49 41C56 30 54 22 47 22C43 22 40 26 37 28Z"
          fill="#e29599"
        />
        <path d="M29 36C22 30 11 38 11 44C11 50 26 46 34 38" stroke="#bdc5cf" strokeWidth="2" />
        <path d="M14 46C20 50 28 46 33 40" stroke="#c8d0d8" strokeWidth="2" />
        <path d="M34 36C34 30 38 25 44 23" stroke="#c6b4c0" strokeWidth="3" />
      </svg>
      <div className="flex flex-col whitespace-nowrap">
        <span className="h-[37px] pl-[12px] font-['Noto_Sans_CJK_SC',sans-serif] text-[29px] leading-[40px] font-black text-[#91cead]">野火论坛</span>
        <span className="font-['Noto_Sans',sans-serif] text-[15px] leading-[22px] text-[#b9dcda]">www.proewildfire.cn</span>
      </div>
    </div>
  );
}

export default function App() {
  return (
    <div className="flex min-h-screen flex-col overflow-hidden bg-[#e8eaed] font-['Noto_Sans','Noto_Sans_CJK_SC',sans-serif] text-[12px] leading-[16px] text-[#4c4e51]">
      <Ribbon />
      <div className="flex flex-1">
        <SidePanel />
        <main className="relative flex-1 overflow-hidden">
          <Model />
          <ViewToolbar />
          <Watermark />
        </main>
      </div>
    </div>
  );
}
